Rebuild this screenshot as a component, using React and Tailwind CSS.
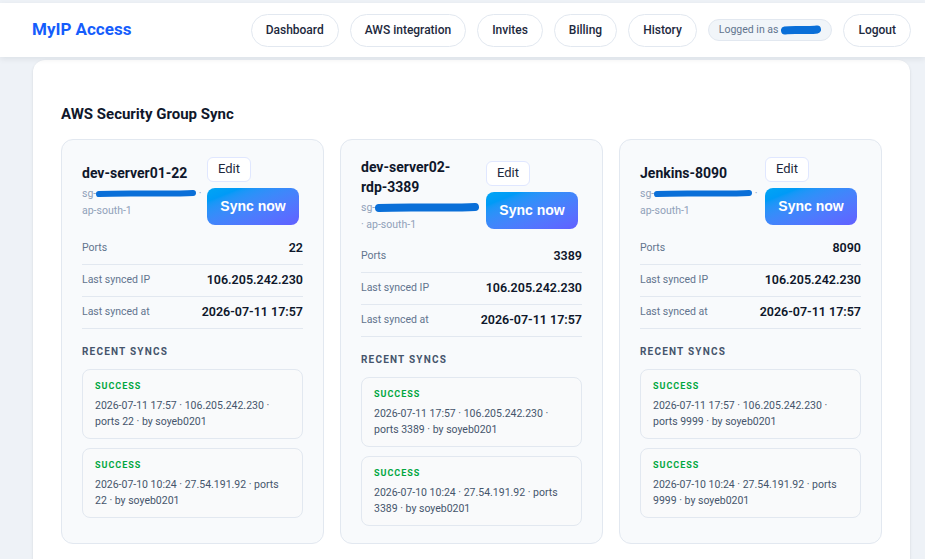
import React from 'react';

const navItems = ['Dashboard', 'AWS integration', 'Invites', 'Billing', 'History'];

const servers = [
  {
    name: 'dev-server01-22',
    scribble: 100,
    dotInline: true,
    ports: '22',
    ip: '106.205.242.230',
    at: '2026-07-11 17:57',
    syncs: [
      '2026-07-11 17:57 · 106.205.242.230 · ports 22 · by soyeb0201',
      '2026-07-10 10:24 · 27.54.191.92 · ports 22 · by soyeb0201',
    ],
  },
  {
    name: 'dev-server02-rdp-3389',
    scribble: 104,
    dotInline: false,
    ports: '3389',
    ip: '106.205.242.230',
    at: '2026-07-11 17:57',
    syncs: [
      '2026-07-11 17:57 · 106.205.242.230 · ports 3389 · by soyeb0201',
      '2026-07-10 10:24 · 27.54.191.92 · ports 3389 · by soyeb0201',
    ],
  },
  {
    name: 'Jenkins-8090',
    scribble: 98,
    dotInline: true,
    ports: '8090',
    ip: '106.205.242.230',
    at: '2026-07-11 17:57',
    syncs: [
      '2026-07-11 17:57 · 106.205.242.230 · ports 9999 · by soyeb0201',
      '2026-07-10 10:24 · 27.54.191.92 · ports 9999 · by soyeb0201',
    ],
  },
];

// blue marker stroke used to hide ids in the screenshot
const Scribble = ({ width, height = 9, stroke = 6 }) => (
  <svg width={width} height={height} viewBox={`0 0 ${width} ${height}`} className="inline-block align-middle">
    <path
      d={`M${stroke / 2} ${height / 2 + 0.5} C ${width * 0.3} ${height / 2 - 1}, ${width * 0.7} ${height / 2 + 1}, ${width - stroke / 2} ${height / 2 - 0.5}`}
      stroke="#0a6fd8"
      strokeWidth={stroke}
      strokeLinecap="round"
      fill="none"
    />
  </svg>
);

const Row = ({ label, value }) => (
  <div className="flex h-8 items-center justify-between border-b border-slate-200">
    <span className="text-[10.5px] text-slate-500">{label}</span>
    <span className="text-[12.5px] font-semibold text-slate-900">{value}</span>
  </div>
);

const ServerCard = ({ server }) => (
  <div className="flex flex-col rounded-xl border border-slate-200 bg-[#f8fafc] px-5 py-[17px]">
    {/* Header */}
    <div className="flex items-center gap-[7px]">
      <div className="min-w-0 flex-1">
        <h3 className="max-w-[110px] text-[14px] font-bold leading-[20px] text-slate-900">{server.name}</h3>
        <div className="mt-[2px] text-[10.5px] leading-[17px] text-slate-400">
          <div className="whitespace-nowrap">
            sg-<Scribble width={server.scribble} stroke={server.dotInline ? 6 : 8} height={server.dotInline ? 9 : 11} />
            {server.dotInline ? ' ·' : ''}
          </div>
          <div>{server.dotInline ? '' : '· '}ap-south-1</div>
        </div>
      </div>
      <div className="mr-1 flex w-[92px] shrink-0 flex-col items-start gap-[6px]">
        <button className="h-[25px] rounded-md border border-indigo-100 bg-white px-[10px] text-[13px] text-slate-800">
          Edit
        </button>
        <button
          className="h-[37px] w-[92px] rounded-lg bg-linear-to-br from-sky-500 to-indigo-500 text-[14px] font-bold text-white"
          style={{ fontFamily: '"Liberation Sans", Arial, sans-serif' }}
        >
          Sync now
        </button>
      </div>
    </div>

    {/* Details */}
    <div className="mt-2">
      <Row label="Ports" value={server.ports} />
      <Row label="Last synced IP" value={server.ip} />
      <Row label="Last synced at" value={server.at} />
    </div>

    {/* Recent syncs */}
    <h4 className="mt-4 text-[10px] font-bold leading-[14px] tracking-[0.12em] text-slate-600">RECENT SYNCS</h4>
    <div className="mt-[10px] flex flex-col gap-[9px]">
      {server.syncs.map((s, i) => (
        <div key={i} className="rounded-lg border border-slate-200 bg-[#f9fafb] px-3 pt-[9px] pb-[8px]">
          <div className="text-[9px] font-bold leading-[14px] tracking-[0.11em] text-green-600">SUCCESS</div>
          <p className="mt-[5px] max-w-[190px] text-[10.5px] leading-[16px] text-slate-600">{s}</p>
        </div>
      ))}
    </div>
  </div>
);

export default function App() {
  return (
    <div
      className="min-h-screen bg-[#eef2f7] pt-[3px]"
      style={{ fontFamily: 'Roboto, "Noto Sans", sans-serif' }}
    >
      {/* Top bar */}
      <header className="relative z-10 flex h-[54px] items-center justify-between bg-white pl-8 pr-[14px] shadow-[0_2px_6px_rgba(15,23,42,0.08)]">
        <span className="text-[17px] font-bold text-blue-600">MyIP Access</span>
        <nav className="flex items-center gap-[11px]">
          {navItems.map((item) => (
            <span
              key={item}
              className="flex h-[33px] items-center rounded-full border border-slate-200 bg-white px-[14px] text-[12px] font-medium text-slate-800"
            >
              {item}
            </span>
          ))}
          <span className="flex h-[22px] items-center gap-[3px] rounded-full border border-slate-200 bg-slate-100 px-[10px] text-[10.5px] text-slate-500">
            Logged in as <Scribble width={40} height={10} stroke={8} />
          </span>
          <span className="flex h-[33px] items-center rounded-full border border-slate-200 bg-white px-[14px] text-[12px] font-medium text-slate-800">
            Logout
          </span>
        </nav>
      </header>

      {/* Main panel */}
      <main className="ml-[33px] mr-[15px] mt-[3px] rounded-t-xl bg-white px-7 pt-[43px] pb-8 shadow-sm">
        <h2 className="text-[15px] font-bold text-slate-900">AWS Security Group Sync</h2>
        <div className="mt-[13px] grid grid-cols-3 gap-4">
          {servers.map((s) => (
            <ServerCard key={s.name} server={s} />
          ))}
        </div>
      </main>
    </div>
  );
}
